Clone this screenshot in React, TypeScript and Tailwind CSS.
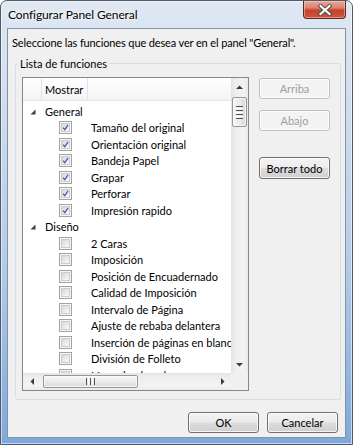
import React from "react";

function CheckBox({ checked }: { checked: boolean }) {
  return (
    <span className="flex h-[13px] w-[13px] shrink-0 border border-[#a3a3a3] bg-[#f6f6f6] p-[1px]">
      <span className="flex h-full w-full items-center justify-center border border-[#c9ccd0] bg-[linear-gradient(135deg,#d5d8dc,#f9f9f9)]">
        {checked && (
          <svg width="9" height="9" viewBox="0 0 9 9">
            <path d="M1.3 4.6 L3.6 7.2 L7.8 1.2" stroke="#4a5fa8" strokeWidth="1.7" fill="none" />
          </svg>
        )}
      </span>
    </span>
  );
}

function GroupRow({ label }: { label: string }) {
  return (
    <div className="flex h-[16.5px] items-center whitespace-nowrap pl-[7px]">
      <svg width="6" height="6" viewBox="0 0 6 6" className="mt-[1px] shrink-0">
        <polygon points="5.5,0.5 5.5,5.5 0.5,5.5" fill="#3f3f3f" />
      </svg>
      <span className="ml-[9px]">{label}</span>
    </div>
  );
}

function ItemRow({ label, checked }: { label: string; checked: boolean }) {
  return (
    <div className="flex h-[16.5px] items-center whitespace-nowrap pl-[36px]">
      <CheckBox checked={checked} />
      <span className="ml-[19px]">{label}</span>
    </div>
  );
}

function Arrow({ dir }: { dir: "up" | "down" | "left" | "right" }) {
  const pts: Record<string, string> = {
    up: "0,4 3.5,0.5 7,4",
    down: "0,0 7,0 3.5,3.5",
    left: "4,0 4,7 0.5,3.5",
    right: "0,0 0,7 3.5,3.5",
  };
  const vertical = dir === "up" || dir === "down";
  return (
    <svg width={vertical ? 7 : 4} height={vertical ? 4 : 7} viewBox={vertical ? "0 0 7 4" : "0 0 4 7"}>
      <polygon points={pts[dir]} fill="#3a3a3a" />
    </svg>
  );
}

function VScroll() {
  return (
    <div className="flex flex-col bg-[linear-gradient(90deg,#e3e3e3,#eeeeee_25%,#f3f3f3_75%,#e9e9e9)]">
      <div className="flex h-[17px] shrink-0 items-center justify-center">
        <Arrow dir="up" />
      </div>
      <div className="flex flex-1 flex-col px-[1px] pt-[2px]">
        <div className="flex h-[30px] flex-col items-center justify-center gap-[1px] rounded-[2px] border border-[#979797] bg-[linear-gradient(90deg,#f5f5f5,#ebebeb_50%,#d9d9d9)] shadow-[inset_0_0_0_1px_rgba(255,255,255,0.7)]">
          <span className="h-[1px] w-[7px] bg-[#555]" />
          <span className="h-[1px] w-[7px] bg-[#fff]" />
          <span className="h-[1px] w-[7px] bg-[#555]" />
          <span className="h-[1px] w-[7px] bg-[#fff]" />
          <span className="h-[1px] w-[7px] bg-[#555]" />
          <span className="h-[1px] w-[7px] bg-[#fff]" />
          <span className="h-[1px] w-[7px] bg-[#555]" />
        </div>
      </div>
      <div className="flex h-[17px] shrink-0 items-center justify-center">
        <Arrow dir="down" />
      </div>
    </div>
  );
}

function HScroll() {
  return (
    <div className="flex bg-[linear-gradient(180deg,#e3e3e3,#eeeeee_25%,#f3f3f3_75%,#e9e9e9)]">
      <div className="flex w-[17px] shrink-0 items-center justify-center">
        <Arrow dir="left" />
      </div>
      <div className="flex flex-1 items-center pl-[3px]">
        <div className="flex h-[13px] w-[95px] items-center justify-center gap-[1px] rounded-[2px] border border-[#979797] bg-[linear-gradient(180deg,#f5f5f5,#ebebeb_50%,#d9d9d9)] shadow-[inset_0_0_0_1px_rgba(255,255,255,0.7)]">
          <span className="h-[7px] w-[1px] bg-[#555]" />
          <span className="h-[7px] w-[1px] bg-[#fff]" />
          <span className="h-[7px] w-[1px] bg-[#555]" />
          <span className="h-[7px] w-[1px] bg-[#fff]" />
          <span className="h-[7px] w-[1px] bg-[#555]" />
        </div>
      </div>
      <div className="flex w-[17px] shrink-0 items-center justify-center">
        <Arrow dir="right" />
      </div>
    </div>
  );
}

function Btn({ children, disabled, h = "h-[21px]" }: { children: React.ReactNode; disabled?: boolean; h?: string }) {
  if (disabled) {
    return (
      <div className={`flex w-[71px] ${h} items-center justify-center rounded-[3px] border border-[#bfc2c5] bg-[#f4f4f4] text-[#a0a0a0] shadow-[inset_0_0_0_1px_rgba(255,255,255,0.8)]`}>
        {children}
      </div>
    );
  }
  return (
    <div className={`flex w-[71px] ${h} items-center justify-center rounded-[3px] border border-[#707070] bg-[linear-gradient(180deg,#f3f3f3_0%,#ebebeb_48%,#dddddd_52%,#cfcfcf_100%)] shadow-[inset_0_0_0_1px_rgba(255,255,255,0.8)]`}>
      {children}
    </div>
  );
}

const general = [
  "Tamaño del original",
  "Orientación original",
  "Bandeja Papel",
  "Grapar",
  "Perforar",
  "Impresión rapido",
];

const diseno = [
  "2 Caras",
  "Imposición",
  "Posición de Encuadernado",
  "Calidad de Imposición",
  "Intervalo de Página",
  "Ajuste de rebaba delantera",
  "Inserción de páginas en blanco",
  "División de Folleto",
  "Línea de plegado",
];

function ListBox() {
  return (
    <div className="grid h-[314px] w-[227px] shrink-0 grid-cols-[1fr_17px] grid-rows-[1fr_17px] border border-[#828790] bg-white">
      <div className="overflow-hidden">
        <div className="flex h-[23px] border-b border-[#e5e5e5] bg-[linear-gradient(180deg,#ffffff,#f3f4f6)]">
          <div className="w-[19px] border-r border-[#e3e4e6]" />
          <div className="flex w-[46px] items-center border-r border-[#e3e4e6] pl-[3px]">Mostrar</div>
          <div className="flex-1" />
        </div>
        <div className="pt-[2px]">
          <GroupRow label="General" />
          {general.map((g) => (
            <ItemRow key={g} label={g} checked />
          ))}
          <GroupRow label="Diseño" />
          {diseno.map((g) => (
            <ItemRow key={g} label={g} checked={false} />
          ))}
        </div>
      </div>
      <VScroll />
      <HScroll />
      <div className="bg-[#f0f0f0]" />
    </div>
  );
}

function CloseBtn() {
  return (
    <div className="flex h-[18px] w-[43px] items-center justify-center rounded-b-[4px] border border-t-0 border-[#5b2a22] bg-[linear-gradient(180deg,#e8a797_0%,#d98470_40%,#c4432a_55%,#d2553a_100%)] shadow-[inset_0_0_0_1px_rgba(255,220,210,0.45)]">
      <svg width="14" height="12" viewBox="0 0 14 12">
        <path d="M2.5 2 L11.5 10 M11.5 2 L2.5 10" stroke="#4a4a4a" strokeWidth="4" strokeLinecap="square" />
        <path d="M2.5 2 L11.5 10 M11.5 2 L2.5 10" stroke="#ffffff" strokeWidth="2.2" strokeLinecap="square" />
      </svg>
    </div>
  );
}

export default function App() {
  return (
    <div className="h-[445px] w-[353px] text-[11px] leading-[15px] text-black [font-family:Lato,sans-serif]">
      <div className="flex h-full flex-col rounded-t-[7px] border border-[#4d5b6b] bg-[linear-gradient(180deg,#dfe8f3_0%,#cfdcec_25%,#b3cbe8_60%,#7fa8da_100%)] shadow-[inset_0_0_0_1px_rgba(255,255,255,0.55)]">
        <div className="flex h-[27px] shrink-0 items-start justify-between pl-[7px] pr-[6px]">
          <span className="mt-[6px] text-[12px] leading-[15px] tracking-[-0.1px] [text-shadow:0_0_6px_#fff,0_0_3px_#fff]">
            Configurar Panel General
          </span>
          <CloseBtn />
        </div>
        <div className="mx-[6px] mb-[6px] flex flex-1 flex-col border border-[#7f93ab] bg-[#f0f0f0]">
          <p className="pl-[4px] pt-[6px] tracking-[-0.13px]">Seleccione las funciones que desea ver en el panel "General".</p>
          <fieldset className="ml-[7px] mr-[4px] mt-[6px] rounded-[3px] border border-[#d5dfe5] pb-[8px] pl-[6px] pr-[9px] pt-[6px]">
            <legend className="-ml-[4px] px-[2px]">Lista de funciones</legend>
            <div className="flex gap-[10px]">
              <ListBox />
              <div className="flex w-[71px] flex-col pt-[1px]">
                <Btn disabled>Arriba</Btn>
                <div className="mt-[11px]">
                  <Btn disabled>Abajo</Btn>
                </div>
                <div className="mt-[26px]">
                  <Btn h="h-[22px]">Borrar todo</Btn>
                </div>
              </div>
            </div>
          </fieldset>
          <div className="mt-auto flex justify-end gap-[8px] pb-[4px] pr-[7px]">
            <Btn>OK</Btn>
            <Btn>Cancelar</Btn>
          </div>
        </div>
      </div>
    </div>
  );
}
